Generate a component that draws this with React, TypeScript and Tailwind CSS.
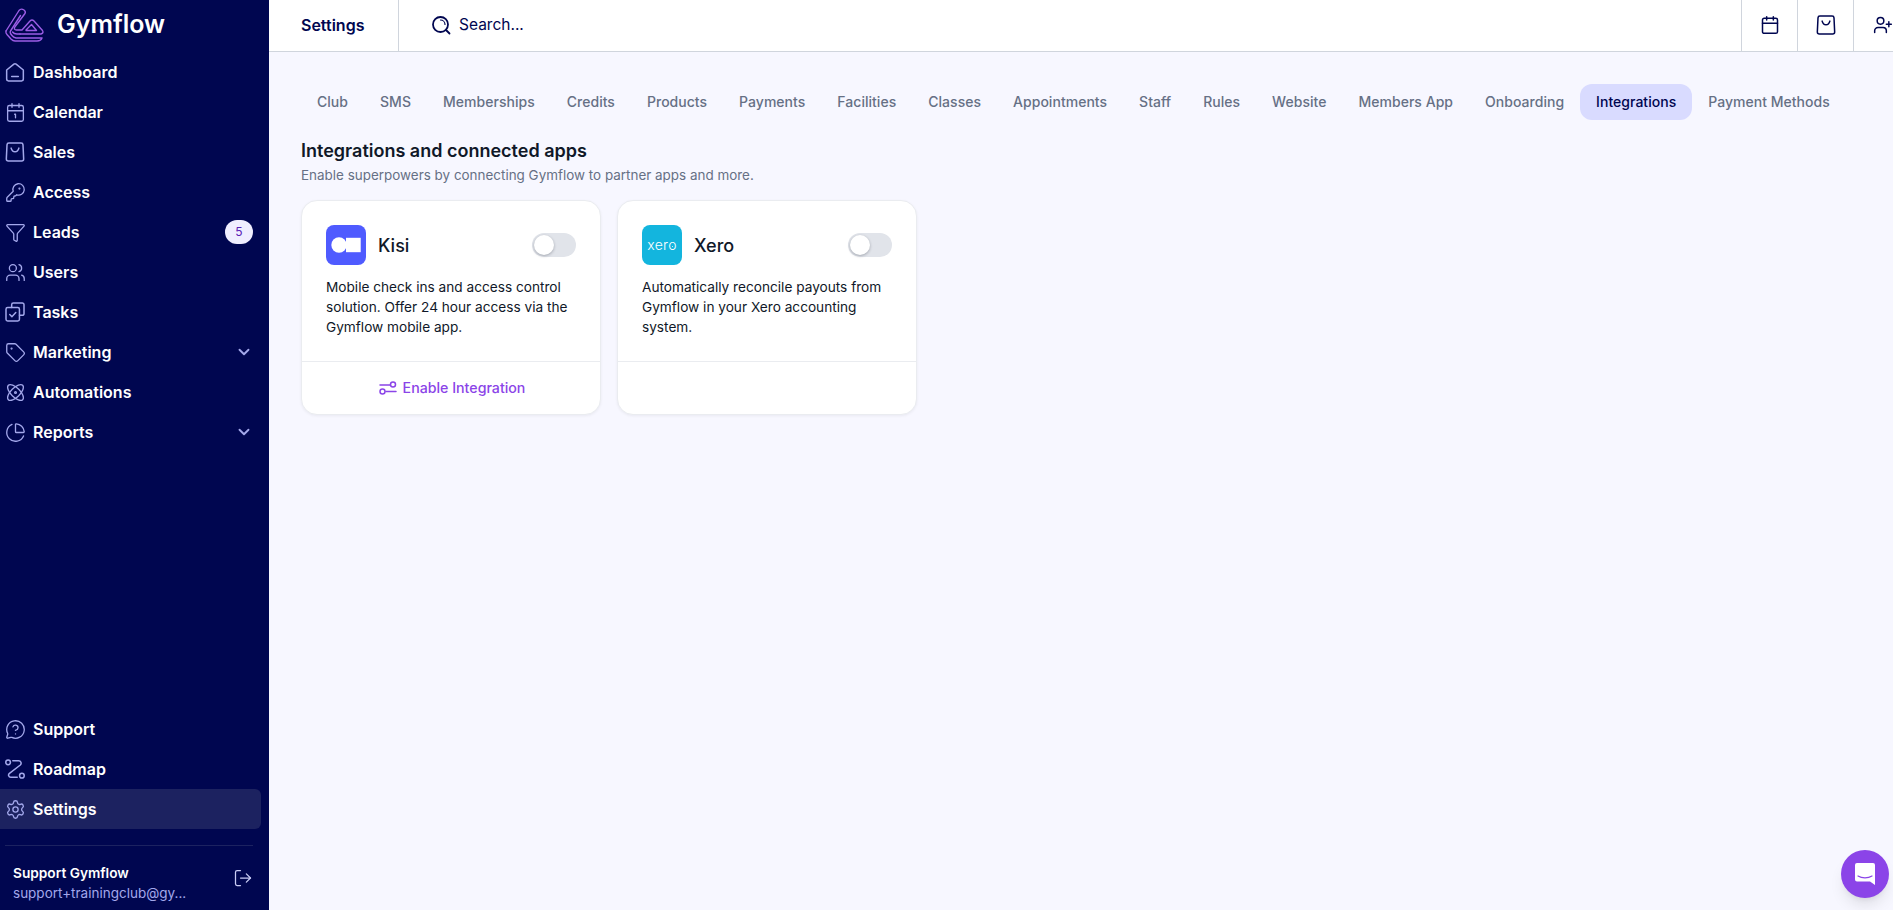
import React from 'react';
import {
  Atom,
  Calendar,
  Calendar1,
  ChartPie,
  ChevronDown,
  Funnel,
  KeyRound,
  LogOut,
  MessageCircleQuestion,
  Settings,
  Tag,
  UserPlus,
  Users,
} from 'lucide-react';

const font = { fontFamily: 'Inter, "Noto Sans", sans-serif' };

function HomeIcon({ className }: { className?: string }) {
  return (
    <svg viewBox="1 1 18 18" fill="none" stroke="currentColor" strokeWidth="1.350" className={className}>
      <path d="M2.500 8.200 9 2.900a1.600 1.600 0 0 1 2 0l6.500 5.300v8.200a1.600 1.600 0 0 1-1.600 1.600H4.100a1.600 1.600 0 0 1-1.600-1.600V8.200Z" strokeLinejoin="round" />
      <path d="M7 14h6" strokeLinecap="round" />
    </svg>
  );
}

function BagIcon({ className }: { className?: string }) {
  return (
    <svg viewBox="1 1 18 18" fill="none" stroke="currentColor" strokeWidth="1.350" className={className}>
      <path d="M4.500 2h11A1.700 1.700 0 0 1 17.200 3.600l.6 12.600a1.800 1.800 0 0 1-1.800 1.800H4a1.800 1.800 0 0 1-1.800-1.800l.6-12.600A1.700 1.700 0 0 1 4.500 2Z" strokeLinejoin="round" />
      <path d="M6.500 6.500c.6 2.200 1.900 3.300 3.500 3.300s2.900-1.100 3.500-3.300" strokeLinecap="round" />
    </svg>
  );
}

function TasksIcon({ className }: { className?: string }) {
  return (
    <svg viewBox="1 1 18 18" fill="none" stroke="currentColor" strokeWidth="1.350" strokeLinecap="round" strokeLinejoin="round" className={className}>
      <path d="M7 6V3.400A1.500 1.500 0 0 1 8.500 1.900h8.100a1.500 1.500 0 0 1 1.500 1.500v8.100a1.500 1.500 0 0 1-1.500 1.500H14" />
      <rect x="1.900" y="6" width="12.100" height="12.100" rx="1.500" />
      <path d="M5.300 12.300l1.900 1.900 3.500-3.800" />
    </svg>
  );
}

function RoadmapIcon({ className }: { className?: string }) {
  return (
    <svg viewBox="1 1 18 18" fill="none" stroke="currentColor" strokeWidth="1.350" strokeLinecap="round" strokeLinejoin="round" className={className}>
      <circle cx="3.800" cy="4" r="2.100" />
      <circle cx="16.200" cy="16" r="2.100" />
      <path d="M8 2.600h5.300a2.200 2.200 0 0 1 1.500 3.800l-9.800 7.500a2 2 0 0 0 1.200 3.600H12" />
    </svg>
  );
}

function GymflowLogo() {
  return (
    <svg viewBox="4 6 41 36" fill="none" stroke="#9B5DE5" strokeWidth="1.400" strokeLinejoin="round" strokeLinecap="round" className="w-[41px] h-9 shrink-0">
      <path d="M6 30 19 9.500Q21 7 24 9Q26 10.500 25 12.500L14.800 26Q13.500 29 16.500 29H22L30 20Q32 18 34 20L42.500 29.500Q44 32 41 33H20" />
      <path d="M6 30Q5.500 32 7 33.500L11 38Q13 40 15 40H37Q41 40 42 37H16Q13.500 36.500 12 34.500L10.500 32.500Q9.800 31 10.500 30L20.500 14.500" />
      <path d="M20 33H17Q14 33 12.500 31" />
      <path d="M26 29 31.500 23.500 36.500 29.500H26" />
    </svg>
  );
}

function KisiLogo() {
  return (
    <div className="w-10 h-10 rounded-lg bg-[#4F5BFF] shrink-0">
      <svg viewBox="0 0 40 40" className="w-10 h-10">
        <circle cx="13" cy="20" r="7.700" fill="#fff" />
        <rect x="20" y="12.800" width="14.700" height="14.400" fill="#fff" />
      </svg>
    </div>
  );
}

function XeroLogo() {
  return (
    <div className="w-10 h-10 rounded-lg bg-[#13B5DE] flex items-center justify-center shrink-0">
      <span className="relative inline-block text-white text-[14px] font-light leading-none tracking-[0.3px]">
        xero
        <span className="absolute right-[3.500px] top-[7.500px] w-[1.500px] h-[1.500px] rounded-full bg-white" />
      </span>
    </div>
  );
}

function Toggle() {
  return (
    <div className="w-11 h-6 rounded-full bg-[#E1E4EA] p-0.5 shrink-0">
      <div className="w-5 h-5 rounded-full bg-white shadow-[0_1px_3px_rgba(16,24,40,0.3)]" />
    </div>
  );
}

const mainNav = [
  { label: 'Dashboard', icon: <HomeIcon className="w-5 h-5" /> },
  { label: 'Calendar', icon: <Calendar1 size={21} strokeWidth={1.5} /> },
  { label: 'Sales', icon: <BagIcon className="w-5 h-5" /> },
  { label: 'Access', icon: <KeyRound size={21} strokeWidth={1.5} /> },
  { label: 'Leads', icon: <Funnel size={21} strokeWidth={1.5} />, badge: '5' },
  { label: 'Users', icon: <Users size={21} strokeWidth={1.5} /> },
  { label: 'Tasks', icon: <TasksIcon className="w-5 h-5" /> },
  { label: 'Marketing', icon: <Tag size={21} strokeWidth={1.5} />, chevron: true },
  { label: 'Automations', icon: <Atom size={21} strokeWidth={1.5} /> },
  { label: 'Reports', icon: <ChartPie size={21} strokeWidth={1.5} />, chevron: true },
];

const bottomNav = [
  { label: 'Support', icon: <MessageCircleQuestion size={21} strokeWidth={1.5} /> },
  { label: 'Roadmap', icon: <RoadmapIcon className="w-5 h-5" /> },
  { label: 'Settings', icon: <Settings size={21} strokeWidth={1.5} />, active: true },
];

type NavItem = {
  label: string;
  icon: React.ReactNode;
  badge?: string;
  chevron?: boolean;
  active?: boolean;
};

function NavRow({ item }: { item: NavItem }) {
  return (
    <div className={`h-10 w-[261px] flex items-center rounded-r-md pl-[5px] pr-2 ${item.active ? 'bg-[#1C2260]' : ''}`}>
      <span className="w-7 text-[#A3A8EB] shrink-0">{item.icon}</span>
      <span className="flex-1 text-white text-base font-semibold">{item.label}</span>
      {item.badge && (
        <span className="w-7 h-6 rounded-full bg-[#F0EEFF] text-[#5B21B6] text-xs flex items-center justify-center">
          {item.badge}
        </span>
      )}
      {item.chevron && <ChevronDown size={18} strokeWidth={2.5} className="text-[#A3A8EB]" />}
    </div>
  );
}

const tabs = [
  'Club',
  'SMS',
  'Memberships',
  'Credits',
  'Products',
  'Payments',
  'Facilities',
  'Classes',
  'Appointments',
  'Staff',
  'Rules',
  'Website',
  'Members App',
  'Onboarding',
  'Integrations',
  'Payment Methods',
];

const integrations = [
  {
    name: 'Kisi',
    logo: <KisiLogo />,
    text: 'Mobile check ins and access control solution. Offer 24 hour access via the Gymflow mobile app.',
    enable: true,
  },
  {
    name: 'Xero',
    logo: <XeroLogo />,
    text: 'Automatically reconcile payouts from Gymflow in your Xero accounting system.',
    enable: false,
  },
];

export default function App() {
  return (
    <div style={font} className="h-[910px] w-full flex overflow-hidden bg-[#F7F7FF] relative">
      {/* sidebar */}
      <aside className="w-[269px] shrink-0 bg-[#000650] flex flex-col">
        <div className="h-[52px] flex items-center pl-1 gap-3 pb-[2px]">
          <GymflowLogo />
          <span className="text-white text-[25px] font-semibold">Gymflow</span>
        </div>
        <nav className="flex-1">
          {mainNav.map((item) => (
            <NavRow key={item.label} item={item} />
          ))}
        </nav>
        <nav>
          {bottomNav.map((item) => (
            <NavRow key={item.label} item={item} />
          ))}
        </nav>
        <div className="mt-4 ml-[5px] mr-4 border-t border-[#1C2260] h-[65px] flex items-center pl-2 pt-[9px]">
          <div className="flex-1 min-w-0">
            <div className="text-white text-[13.700px] font-semibold leading-5">Support Gymflow</div>
            <div className="text-[#A3A8EB] text-[13.500px] leading-5 whitespace-nowrap">support+trainingclub@gy...</div>
          </div>
          <LogOut size={20} strokeWidth={1.5} className="text-[#C9CCF5] -mt-[9px]" />
        </div>
      </aside>

      <main className="flex-1 min-w-0 flex flex-col">
        {/* top bar */}
        <header className="h-[52px] shrink-0 bg-white border-b border-[#D0D5DD] flex items-stretch text-[#000650]">
          <div className="w-[130px] pl-8 pb-0.5 flex items-center border-r border-[#D0D5DD] text-base font-semibold">Settings</div>
          <div className="flex-1 flex items-center pl-8 pb-0.5 gap-2 text-[15.500px]">
            <svg viewBox="0 0 20 20" fill="none" stroke="currentColor" strokeWidth="1.800" strokeLinecap="round" className="w-5 h-5">
              <circle cx="9.500" cy="9.500" r="7.500" />
              <path d="M15 15l3.500 3.500" />
              <path d="M9.500 5a4.500 4.500 0 0 1 4.500 4.500" strokeWidth="1.200" />
            </svg>
            Search...
          </div>
          <div className="w-14 pb-0.5 border-l border-[#D0D5DD] flex items-center justify-center">
            <Calendar size={20} strokeWidth={1.800} />
          </div>
          <div className="w-14 pb-0.5 border-l border-[#D0D5DD] flex items-center justify-center">
            <BagIcon className="w-5 h-5" />
          </div>
          <div className="w-10 pb-0.5 border-l border-[#D0D5DD] flex items-center pl-[19px]">
            <UserPlus size={20} strokeWidth={1.800} className="shrink-0" />
          </div>
        </header>

        <div className="pl-8 pt-8">
          {/* settings tabs */}
          <div className="flex h-9 items-center">
            {tabs.map((tab) => (
              <div
                key={tab}
                className={`h-9 px-4 flex items-center rounded-xl text-sm font-medium whitespace-nowrap tracking-[0.03px] ${
                  tab === 'Integrations' ? 'bg-[#D9DBFF] text-[#000650]' : 'text-[#667085]'
                }`}
              >
                {tab}
              </div>
            ))}
          </div>

          <h1 className="mt-[17px] text-[#101828] text-lg leading-7 font-semibold">Integrations and connected apps</h1>
          <p className="text-[#667085] text-[13.450px] leading-5">Enable superpowers by connecting Gymflow to partner apps and more.</p>

          {/* cards */}
          <div className="mt-[15px] flex gap-4">
            {integrations.map((card) => (
              <div
                key={card.name}
                className="w-[300px] h-[215px] bg-white rounded-2xl border border-[#EAECF0] shadow-[0_1px_3px_rgba(16,24,40,0.06)] flex flex-col"
              >
                <div className="h-[161px] px-6 pt-6 border-b border-[#EAECF0]">
                  <div className="flex items-center">
                    {card.logo}
                    <span className="ml-3 pt-0.5 flex-1 text-lg font-medium text-[#101828]">{card.name}</span>
                    <Toggle />
                  </div>
                  <p className="mt-3 text-[13.650px] leading-5 text-[#101828]">{card.text}</p>
                </div>
                <div className="flex-1 flex items-center justify-center gap-1.5 pl-0.5 text-[#8B44E8] text-[14.200px] font-medium">
                  {card.enable && (
                    <>
                      <svg viewBox="0 0 18 14" fill="none" stroke="currentColor" strokeWidth="1.500" strokeLinecap="round" className="w-[18px] h-[14px]">
                        <path d="M1 4h10" />
                        <circle cx="14" cy="3.500" r="2.500" />
                        <path d="M7 10.500h10" />
                        <circle cx="3.500" cy="10.500" r="2.500" />
                      </svg>
                      Enable Integration
                    </>
                  )}
                </div>
              </div>
            ))}
          </div>
        </div>
      </main>

      {/* chat launcher */}
      <div className="absolute right-1 bottom-3 w-12 h-12 rounded-full bg-[#8B44E8] flex items-center justify-center shadow-lg">
        <svg viewBox="0 0 22 24" className="w-[22px] h-6">
          <path d="M3 1h16a2 2 0 0 1 2 2v20l-5-3.500H3a2 2 0 0 1-2-2V3a2 2 0 0 1 2-2Z" fill="#fff" />
          <path d="M4 14c4 2.500 10 2.500 14 0" fill="none" stroke="#8B44E8" strokeWidth="1.200" strokeLinecap="round" />
        </svg>
      </div>
    </div>
  );
}
